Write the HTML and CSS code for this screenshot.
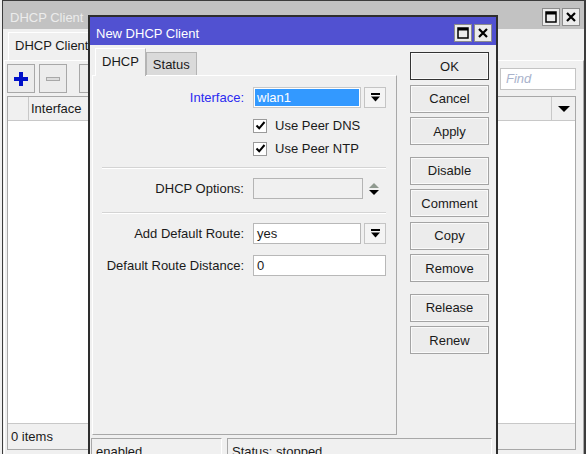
FILE: index.html
```html
<!DOCTYPE html>
<html lang="en">
<head>
  <meta charset="UTF-8" />
  <meta name="viewport" content="width=device-width, initial-scale=1.0"/>
  <title>DHCP Client</title>
  <link rel="stylesheet" href="styles.css">
</head>
<body>
  <!-- background list window -->
  <div class="win bg-win">
    <div class="win-title inactive">
      <span>DHCP Client</span>
      <div class="title-btns">
        <span class="tbtn"><svg width="12" height="12" viewBox="0 0 12 12"><rect x="1" y="1" width="10" height="10" fill="none" stroke="#000" stroke-width="1.5"/><rect x="1" y="1" width="10" height="2.5" fill="#000"/></svg></span>
        <span class="tbtn"><svg width="12" height="12" viewBox="0 0 12 12"><path d="M2 2 L10 10 M10 2 L2 10" stroke="#000" stroke-width="2.2"/></svg></span>
      </div>
    </div>
    <div class="tabs bg-tabs">
      <div class="tab active">DHCP Client</div>
    </div>
    <div class="tab-panel bg-panel">
      <div class="toolbar">
        <span class="tool"><svg width="18" height="18" viewBox="0 0 18 18"><path d="M9 2 V16 M2 9 H16" stroke="#0010c8" stroke-width="4"/></svg></span>
        <span class="tool"><svg width="18" height="18" viewBox="0 0 18 18"><rect x="2.5" y="7.5" width="13" height="3" fill="#dcdcdc" stroke="#a8a8a8"/></svg></span>
        <span class="tool sep"></span>
        <input class="find" type="text" placeholder="Find">
      </div>
      <div class="list">
        <div class="list-head">
          <div class="col-first"></div>
          <div class="col">Interface</div>
          <div class="col grow">s</div>
          <div class="col-menu"><svg width="12" height="8" viewBox="0 0 12 8"><path d="M0 1 H12 L6 7 Z" fill="#000"/></svg></div>
        </div>
        <div class="list-body"></div>
        <div class="list-foot">0 items</div>
      </div>
    </div>
  </div>

  <!-- dialog window -->
  <div class="win dialog">
    <div class="win-title active-title">
      <span>New DHCP Client</span>
      <div class="title-btns">
        <span class="tbtn"><svg width="12" height="12" viewBox="0 0 12 12"><rect x="1" y="1" width="10" height="10" fill="none" stroke="#000" stroke-width="1.5"/><rect x="1" y="1" width="10" height="2.5" fill="#000"/></svg></span>
        <span class="tbtn"><svg width="12" height="12" viewBox="0 0 12 12"><path d="M2 2 L10 10 M10 2 L2 10" stroke="#000" stroke-width="2.2"/></svg></span>
      </div>
    </div>

    <div class="dlg-main">
      <div class="dlg-left">
        <div class="tabs dlg-tabs">
          <div class="tab active">DHCP</div>
          <div class="tab">Status</div>
        </div>
        <div class="tab-panel form">
          <div class="row">
            <label class="lbl blue">Interface:</label>
            <div class="field sel w108">wlan1</div>
            <span class="drop"><svg width="9" height="9" viewBox="0 0 9 9"><rect x="0" y="0" width="9" height="2" fill="#000"/><path d="M0 3.5 H9 L4.5 8.5 Z" fill="#000"/></svg></span>
          </div>
          <div class="row cb-row first-cb">
            <span class="lbl"></span>
            <span class="check"><svg width="11" height="11" viewBox="0 0 11 11"><path d="M1.5 5.5 L4.2 8.3 L9.5 2" fill="none" stroke="#000" stroke-width="2"/></svg></span>
            <span class="cb-text">Use Peer DNS</span>
          </div>
          <div class="row cb-row">
            <span class="lbl"></span>
            <span class="check"><svg width="11" height="11" viewBox="0 0 11 11"><path d="M1.5 5.5 L4.2 8.3 L9.5 2" fill="none" stroke="#000" stroke-width="2"/></svg></span>
            <span class="cb-text">Use Peer NTP</span>
          </div>
          <div class="sep-line s1"></div>
          <div class="row opt-row">
            <label class="lbl">DHCP Options:</label>
            <div class="field disabled w110"></div>
            <span class="updown"><svg width="10" height="14" viewBox="0 0 10 14"><path d="M0 6 L5 1 L10 6 Z" fill="#8f9a8f"/><path d="M0 8 H10 L5 13 Z" fill="#000"/></svg></span>
          </div>
          <div class="sep-line s2"></div>
          <div class="row route-row">
            <label class="lbl">Add Default Route:</label>
            <div class="field w108">yes</div>
            <span class="drop"><svg width="9" height="9" viewBox="0 0 9 9"><rect x="0" y="0" width="9" height="2" fill="#000"/><path d="M0 3.5 H9 L4.5 8.5 Z" fill="#000"/></svg></span>
          </div>
          <div class="row dist-row">
            <label class="lbl">Default Route Distance:</label>
            <div class="field w133">0</div>
          </div>
        </div>
      </div>

      <div class="dlg-buttons">
        <button class="btn default">OK</button>
        <button class="btn">Cancel</button>
        <button class="btn">Apply</button>
        <button class="btn gap">Disable</button>
        <button class="btn">Comment</button>
        <button class="btn">Copy</button>
        <button class="btn">Remove</button>
        <button class="btn gap">Release</button>
        <button class="btn">Renew</button>
      </div>
    </div>

    <div class="statusbar">
      <div class="status-cell c1">enabled</div>
      <div class="status-cell c2">Status: stopped</div>
    </div>
  </div>
</body>
</html>
```

FILE: styles.css
```css
body {
  margin: 0;
  width: 586px;
  height: 454px;
  overflow: hidden;
  position: relative;
  background: #f0f0f0;
  font-family: "Liberation Sans", Arial, sans-serif;
  font-size: 13px;
  color: #1a1a1a;
}
.win {
  position: absolute;
  box-sizing: border-box;
  background: #f0f0f0;
}
.bg-win {
  left: 2px;
  top: 0;
  width: 584px;
  height: 470px;
  border: 1px solid #3c3c3c;
  border-right-width: 2px;
}
.win-title {
  box-sizing: border-box;
  height: 28px;
  display: flex;
  align-items: center;
  justify-content: space-between;
  padding: 4px 4px 0 7px;
}
.win-title.inactive {
  background: #c2c2c2;
  color: #ececec;
}
.title-btns {
  display: flex;
  gap: 2px;
}
.tbtn {
  width: 18px;
  height: 18px;
  box-sizing: border-box;
  border: 1px solid #8c8c8c;
  background: #ececec;
  display: flex;
  align-items: center;
  justify-content: center;
}
.tabs {
  display: flex;
  align-items: flex-end;
  height: 30px;
  padding-left: 5px;
}
.bg-tabs {
  height: 31px;
}
.tab {
  box-sizing: border-box;
  height: 24px;
  padding: 0 6px;
  display: flex;
  align-items: center;
  background: #dadada;
  border: 1px solid #b4b4b4;
  border-bottom: none;
}
.tab.active {
  height: 28px;
  background: #f0f0f0;
  border-color: #fff #b4b4b4 #fff #fff;
  padding-bottom: 2px;
}
.tab-panel {
  box-sizing: border-box;
  border: 1px solid #fff;
  border-right-color: #a8a8a8;
  border-bottom-color: #a8a8a8;
}
.bg-panel {
  margin: 0 0 0 1px;
  height: 420px;
  padding: 3px 2px 0 2px;
}
.toolbar {
  display: flex;
  align-items: center;
  height: 29px;
  width: 569px;
  gap: 4px;
}
.tool {
  width: 28px;
  height: 29px;
  box-sizing: border-box;
  border: 1px solid #a8a8a8;
  background: #ececec;
  display: flex;
  align-items: center;
  justify-content: center;
}
.tool.sep {
  margin-left: 8px;
}
.find {
  margin-left: auto;
  width: 76px;
  height: 22px;
  box-sizing: border-box;
  border: 1px solid #c4c4c4;
  background: #fff;
  font-family: "Liberation Sans", Arial, sans-serif;
  font-size: 13px;
  font-style: italic;
  padding: 0 5px;
}
.find::placeholder {
  color: #a9b3cc;
}
.list {
  margin-top: 3px;
  height: 354px;
  border: 1px solid #a8a8a8;
  display: flex;
  flex-direction: column;
  width: 569px;
  box-sizing: border-box;
}
.list-head {
  height: 23px;
  display: flex;
  border-bottom: 1px solid #c8c8c8;
}
.col-first {
  width: 20px;
  border-right: 1px solid #c8c8c8;
}
.col {
  padding-left: 2px;
  display: flex;
  align-items: center;
  width: 100px;
}
.col.grow {
  flex: 1;
  border-right: 1px solid #c8c8c8;
}
.col-menu {
  width: 23px;
  display: flex;
  align-items: center;
  justify-content: center;
}
.list-body {
  flex: 1;
  background: #fff;
}
.list-foot {
  height: 25px;
  border-top: 1px solid #c8c8c8;
  display: flex;
  align-items: center;
  padding-left: 3px;
}

/* dialog */
.dialog {
  left: 88px;
  top: 15px;
  width: 410px;
  height: 470px;
  border: 2px solid #2e2e2e;
  border-bottom: none;
}
.active-title {
  background: #5151d1;
  color: #fff;
  padding-left: 6px;
}
.dlg-main {
  display: flex;
  height: 390px;
}
.dlg-left {
  width: 305px;
  margin-left: 2px;
  padding-top: 3px;
}
.dlg-tabs {
  height: 27px;
  padding-left: 3px;
}
.dlg-tabs .tab.active {
  height: 28px;
  margin-bottom: -1px;
  position: relative;
  z-index: 1;
}
.dlg-tabs .tab {
  height: 23px;
}
.form {
  height: 360px;
  padding-top: 11px;
}
.row {
  display: flex;
  align-items: center;
  height: 21px;
}
.lbl {
  width: 151px;
  text-align: right;
  margin-right: 9px;
  flex: none;
}
.lbl.blue {
  color: #2b2bf0;
}
.field {
  box-sizing: border-box;
  height: 21px;
  border: 1px solid #b8b8b8;
  background: #fff;
  display: flex;
  align-items: center;
  padding-left: 3px;
}
.field.sel {
  background: #3399ff;
  color: #fff;
  border-color: #c8c8c8;
  box-shadow: inset 0 0 0 1px #fff;
}
.field.disabled {
  background: #f0f0f0;
  border-color: #b4b4b4;
}
.w108 { width: 108px; }
.w110 { width: 110px; }
.w133 { width: 133px; }
.drop {
  width: 22px;
  height: 21px;
  box-sizing: border-box;
  margin-left: 3px;
  border: 1px solid #c4c4c4;
  background: #f4f4f4;
  display: flex;
  align-items: center;
  justify-content: center;
}
.updown {
  margin-left: 6px;
  display: flex;
  align-items: center;
}
.cb-row {
  margin-top: 2px;
}
.cb-row.first-cb {
  margin-top: 7px;
}
.check {
  width: 14px;
  height: 14px;
  box-sizing: border-box;
  border: 1px solid #9a9a9a;
  background: #fff;
  display: flex;
  align-items: center;
  justify-content: center;
}
.cb-text {
  margin-left: 8px;
}
.sep-line {
  height: 1px;
  background: #d4d4d4;
  border-bottom: 1px solid #fff;
  margin: 0 10px 0 9px;
}
.s1 { margin-top: 8px; }
.opt-row { margin-top: 9px; }
.s2 { margin-top: 13px; }
.route-row { margin-top: 9px; }
.dist-row { margin-top: 11px; }

.dlg-buttons {
  margin-left: 13px;
  padding-top: 7px;
  display: flex;
  flex-direction: column;
  gap: 4.5px;
  width: 79px;
}
.btn {
  height: 28px;
  box-sizing: border-box;
  border: 1px solid #a4a4a4;
  box-shadow: inset 0 0 0 1px #fafafa;
  background: #ececec;
  font-family: "Liberation Sans", Arial, sans-serif;
  font-size: 13px;
  color: #1a1a1a;
  padding: 0;
}
.btn.default {
  border-color: #333;
}
.btn.gap {
  margin-top: 7px;
}
.statusbar {
  display: flex;
  gap: 5px;
  margin: 3px 0 0 1px;
}
.status-cell {
  box-sizing: border-box;
  height: 24px;
  border: 1px solid #a8a8a8;
  border-right-color: #fff;
  border-bottom-color: #fff;
  padding: 5px 0 0 4px;
}
.c1 { width: 131px; }
.c2 { width: 265px; }
```
